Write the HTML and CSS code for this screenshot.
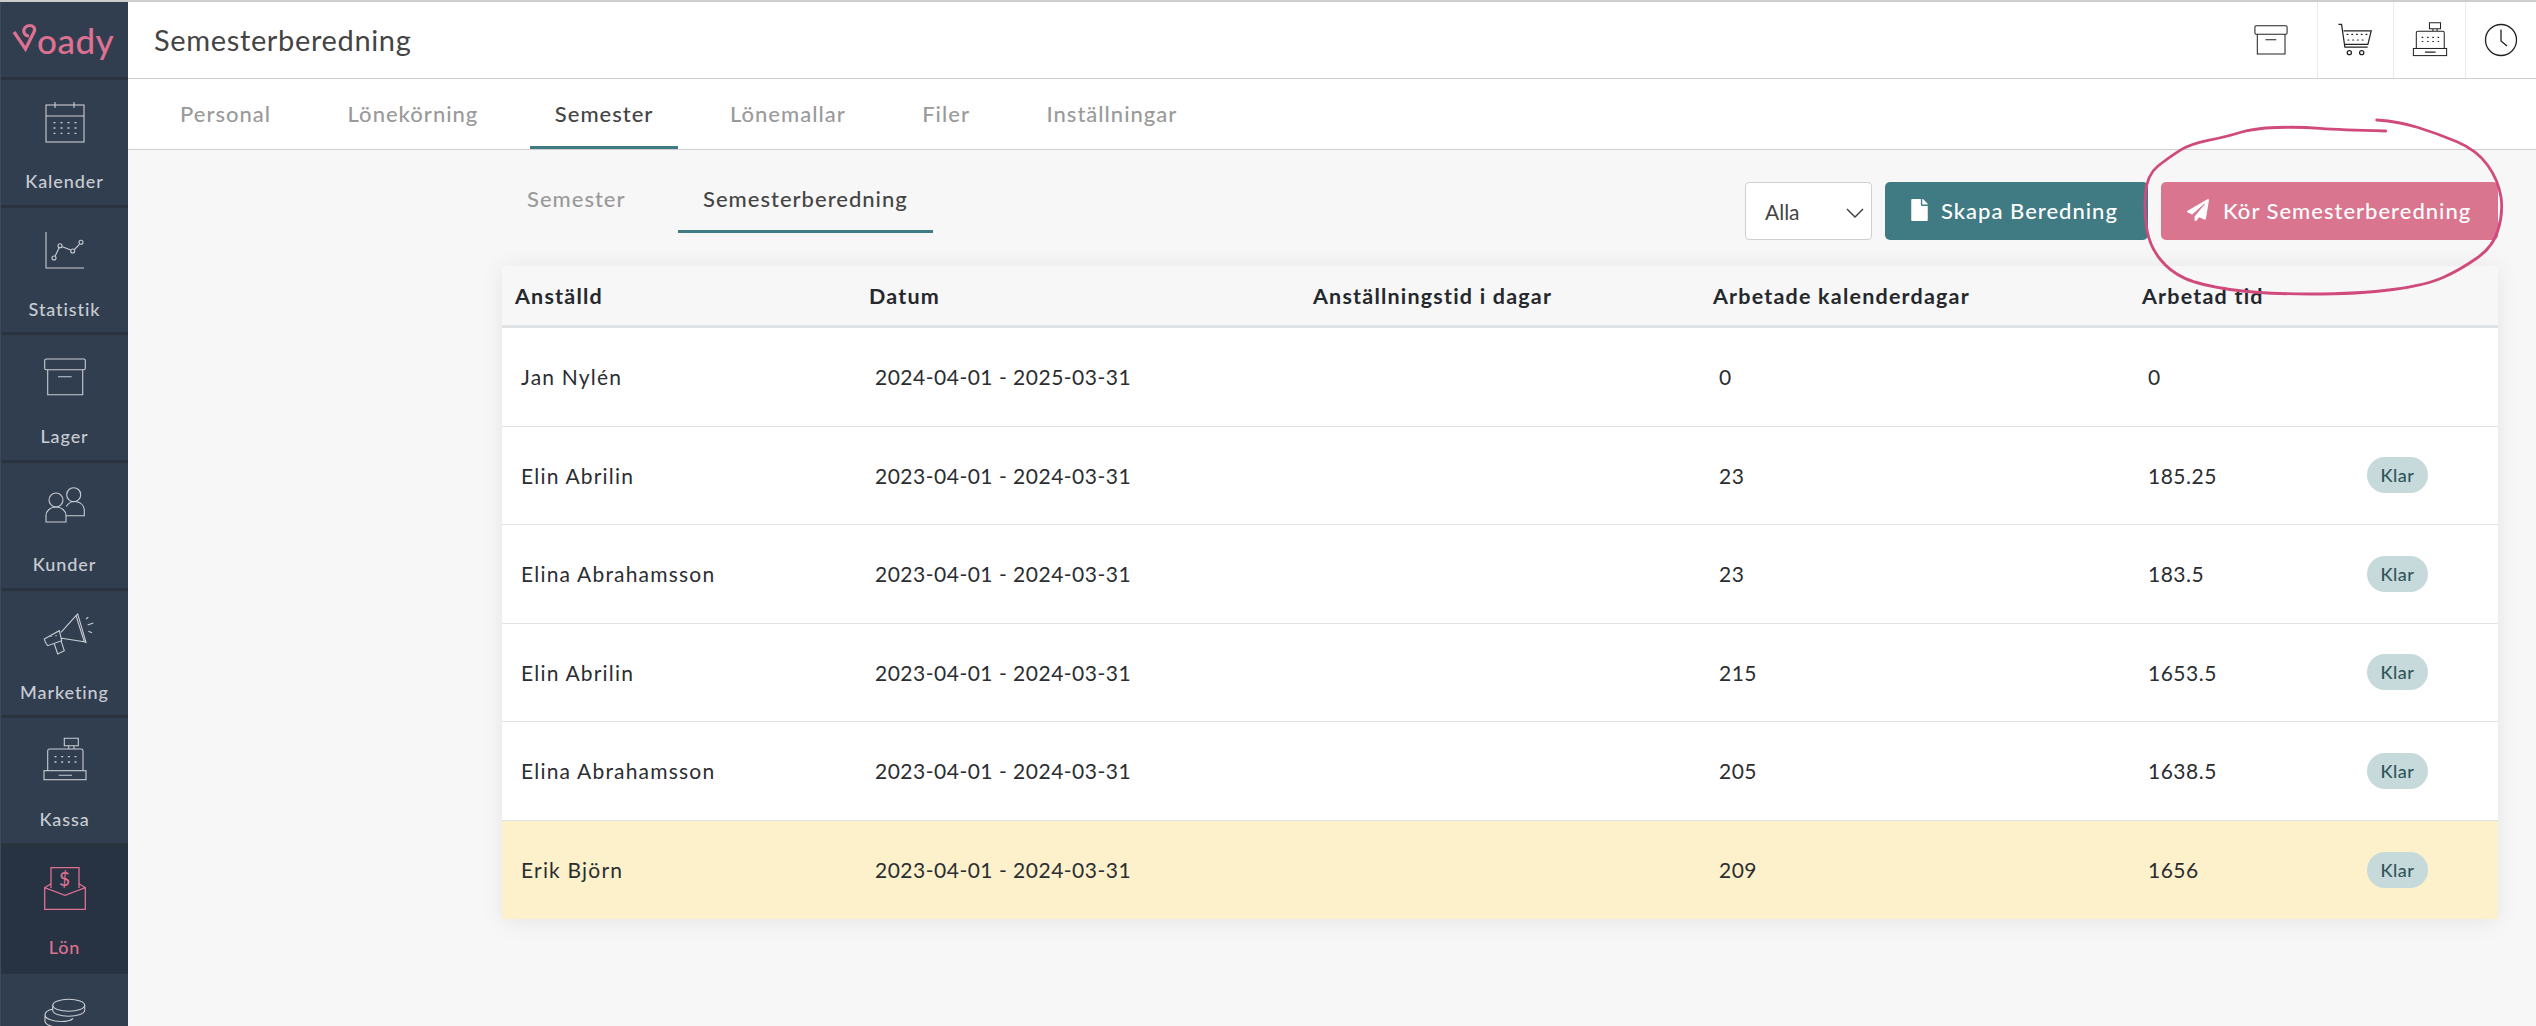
FILE: index.html
```html
<!DOCTYPE html>
<html lang="sv">
  <head>
    <meta charset="UTF-8" />
    <title>Semesterberedning</title>
    <link rel="stylesheet" href="styles.css">
  </head>
  <body>
    <svg class="sprite" width="0" height="0">
      <symbol id="i-archive" viewBox="0 0 48 48">
        <rect x="3.7" y="6" width="40.6" height="10.7" rx="1.5" />
        <path d="M6.7 16.7v25h35v-25M17 23.7h13.7" />
      </symbol>
      <symbol id="i-cash" viewBox="0 0 48 48">
        <rect x="3" y="34.7" width="42" height="9" />
        <path d="M6.7 34.7V15a2 2 0 0 1 2-2h31.3a2 2 0 0 1 2 2v19.7M23.3 2.3h14v7.4h-14zM27.7 9.7V13M33 9.7V13M17.7 39.3H31" />
        <path class="dots" d="M14 20.7h21M14 26h21" stroke-dasharray="1 5.7" />
      </symbol>
    </svg>

    <aside class="sidebar">
      <div class="logo">
        <svg class="logo-v" viewBox="0 0 24 30">
          <path d="M1 7L12.500 24 21 7C23 3 20 .5 16.500 .5 12.500 .5 10 4 11 7.500 12 10 14 11 16 11" />
        </svg>
        <span>oady</span>
      </div>
      <a class="side-item">
        <svg class="side-icon" viewBox="0 0 48 48">
          <rect x="5" y="7" width="38" height="37" />
          <path d="M5 18h38M14 4v6M33 4v6" />
          <path class="dots" d="M13 24.700h22M13 30h22M13 35.300h22" stroke-dasharray="1 6" />
        </svg>
        <span>Kalender</span>
      </a>
      <a class="side-item">
        <svg class="side-icon" viewBox="0 0 48 48">
          <path d="M5 6v36h38M14.200 30l4-8.500M21.300 20.800l8.500 3.300M33.400 23.500l5-5.200" />
          <circle cx="13" cy="32" r="2" />
          <circle cx="19" cy="19.700" r="2" />
          <circle cx="31.700" cy="25" r="2" />
          <circle cx="40" cy="16.300" r="2" />
        </svg>
        <span>Statistik</span>
      </a>
      <a class="side-item">
        <svg class="side-icon"><use href="#i-archive" /></svg>
        <span>Lager</span>
      </a>
      <a class="side-item">
        <svg class="side-icon" viewBox="0 0 48 48">
          <circle cx="15" cy="19" r="7" />
          <circle cx="32.700" cy="13.700" r="7" />
          <path d="M5 41v-6.500a10 8.500 0 0 1 20 0V41zM25 34.700h18.300V29a9.500 9 0 0 0-18-3.500" />
        </svg>
        <span>Kunder</span>
      </a>
      <a class="side-item">
        <svg class="side-icon" viewBox="0 0 48 48">
          <path d="M3.300 30l1 3 2.400 3.700 14-5-2.400-10zM13.300 35l3.400 10 6.600-3.300-3.300-10M20 23.300L35 6.700M20.700 29.300l22.600 3.400M35 6.700l1.700-1.700 8.300 28.300-1.700-.6z" />
          <path d="M45 10l2.300-1.700M46.700 16l5.600-2M47.300 22.300l3.700 1.400" />
          <path class="dots" d="M10 27.300h.1M15 26.700h.1" />
        </svg>
        <span>Marketing</span>
      </a>
      <a class="side-item">
        <svg class="side-icon"><use href="#i-cash" /></svg>
        <span>Kassa</span>
      </a>
      <a class="side-item side-item-active">
        <svg class="side-icon" viewBox="0 0 48 48">
          <path d="M3.700 23.700v21.600h40.600V23.700L24 31.400zM3.700 23.700l6.300-4M44.300 23.700l-6.300-4M10 24V3.700h28V24" />
          <text x="24" y="22" class="side-dollar">$</text>
        </svg>
        <span>Lön</span>
      </a>
      <a class="side-item">
        <svg class="side-icon" viewBox="0 0 48 48">
          <ellipse cx="27.700" cy="13.300" rx="16" ry="6" />
          <path d="M11.700 13.300v5c0 3.300 7.200 6 16 6s16-2.700 16-6v-5M12 17c-5 1-8 3-8 6 0 3.500 7 6.500 16 6.500 6 0 10-1 12-3M4 23v6c0 3.500 7 6.500 16 6.500" />
        </svg>
      </a>
    </aside>

    <div class="main">
      <header class="topbar">
        <h1 class="page-title">Semesterberedning</h1>
        <div class="topbar-actions">
          <div class="topbar-cell topbar-cell-first">
            <svg class="top-icon"><use href="#i-archive" /></svg>
          </div>
          <div class="topbar-cell topbar-cell-cart">
            <svg class="top-icon" viewBox="0 0 40 40">
              <path d="M1.500 3.500h3.300l3.500 24h24M7 10.500h29l-3.500 14H8.500" />
              <path class="dots" d="M10.500 14h24M11.500 20h19" stroke-dasharray="1 4" />
              <circle cx="13" cy="33.300" r="2.200" />
              <circle cx="26" cy="33.300" r="2.200" />
            </svg>
          </div>
          <div class="topbar-cell topbar-cell-cash">
            <svg class="top-icon"><use href="#i-cash" /></svg>
          </div>
          <div class="topbar-cell topbar-cell-clock">
            <svg class="top-icon" viewBox="0 0 36 36">
              <circle cx="18" cy="18" r="15.500" />
              <path d="M18 7.500v11.500l6 5" />
            </svg>
          </div>
        </div>
      </header>

      <nav class="tabs">
        <a class="tab">Personal</a>
        <a class="tab">Lönekörning</a>
        <a class="tab tab-active">Semester</a>
        <a class="tab">Lönemallar</a>
        <a class="tab">Filer</a>
        <a class="tab">Inställningar</a>
      </nav>

      <section class="content">
        <div class="toolbar">
          <div class="tabs-sub">
            <a class="tab">Semester</a>
            <a class="tab tab-active">Semesterberedning</a>
          </div>
          <div class="toolbar-actions">
            <div class="select">
              Alla
              <svg class="select-arrow" viewBox="0 0 18 10"><path d="M1 1l8 8 8-8" /></svg>
            </div>
            <button class="btn btn-teal">
              <svg class="btn-icon btn-icon-file" viewBox="0 0 384 512">
                <path d="M224 136V0H24C10.700 0 0 10.700 0 24v464c0 13.300 10.700 24 24 24h336c13.300 0 24-10.700 24-24V160H248c-13.200 0-24-10.800-24-24zm160-14.100v6.100H256V0h6.100c6.400 0 12.500 2.500 17 7l97.900 98c4.500 4.500 7 10.600 7 16.900z" />
              </svg>
              Skapa Beredning
            </button>
            <button class="btn btn-pink">
              <svg class="btn-icon" viewBox="0 0 512 512">
                <path d="M476 3.200L12.500 270.600c-18.100 10.400-15.800 35.600 2.200 43.200L121 358.400l287.300-253.200c5.500-4.900 13.300 2.600 8.600 8.300L176 407v80.500c0 23.600 28.500 32.900 42.500 15.800L282 426l124.600 52.200c14.200 6 30.400-2.900 33-18.200l72-432C515 7.800 493.300-6.800 476 3.200z" />
              </svg>
              Kör Semesterberedning
            </button>
          </div>
        </div>

        <table class="report">
          <colgroup>
            <col class="col-name" />
            <col class="col-date" />
            <col class="col-days" />
            <col class="col-worked" />
            <col class="col-time" />
            <col class="col-status" />
          </colgroup>
          <thead>
            <tr>
              <th>Anställd</th>
              <th>Datum</th>
              <th>Anställningstid i dagar</th>
              <th>Arbetade kalenderdagar</th>
              <th>Arbetad tid</th>
              <th></th>
            </tr>
          </thead>
          <tbody>
            <tr>
              <td>Jan Nylén</td>
              <td>2024-04-01 - 2025-03-31</td>
              <td></td>
              <td>0</td>
              <td>0</td>
              <td></td>
            </tr>
            <tr>
              <td>Elin Abrilin</td>
              <td>2023-04-01 - 2024-03-31</td>
              <td></td>
              <td>23</td>
              <td>185.25</td>
              <td><span class="badge">Klar</span></td>
            </tr>
            <tr>
              <td>Elina Abrahamsson</td>
              <td>2023-04-01 - 2024-03-31</td>
              <td></td>
              <td>23</td>
              <td>183.5</td>
              <td><span class="badge">Klar</span></td>
            </tr>
            <tr>
              <td>Elin Abrilin</td>
              <td>2023-04-01 - 2024-03-31</td>
              <td></td>
              <td>215</td>
              <td>1653.5</td>
              <td><span class="badge">Klar</span></td>
            </tr>
            <tr>
              <td>Elina Abrahamsson</td>
              <td>2023-04-01 - 2024-03-31</td>
              <td></td>
              <td>205</td>
              <td>1638.5</td>
              <td><span class="badge">Klar</span></td>
            </tr>
            <tr class="row-highlight">
              <td>Erik Björn</td>
              <td>2023-04-01 - 2024-03-31</td>
              <td></td>
              <td>209</td>
              <td>1656</td>
              <td><span class="badge">Klar</span></td>
            </tr>
          </tbody>
        </table>
      </section>
    </div>

    <!-- handritad markering ovanpå knappen -->
    <svg class="scribble" viewBox="0 0 2536 1026">
      <path d="M2385.700 131Q2340 130 2320 128.400Q2300 126.700 2276.700 127.500Q2253.300 128.300 2240 132.500Q2226.700 136.700 2208 140.400Q2190 144 2180 150.400Q2170 156.700 2158 166Q2146.700 175 2145.400 194Q2144 213.300 2147 230Q2150 246.700 2160 259Q2170 271.700 2185 278.400Q2200 285 2230 289.500Q2260 294 2310 294Q2360 294 2393 289.500Q2426.700 285 2443 277.500Q2460 270 2477 258Q2493.300 246.700 2498 230Q2503.300 213.300 2501 197Q2498.300 180 2487.500 165Q2476.700 150 2457 141.700Q2436.700 133.300 2418 127.500Q2400 121.700 2376.700 120" />
    </svg>
  </body>
</html>
```

FILE: styles.css
```css
* {
  margin: 0;
  padding: 0;
  box-sizing: border-box;
  font-family: "Lato", "Liberation Sans", sans-serif;
}

html,
body {
  height: 1026px;
  overflow: hidden;
}

body {
  display: flex;
  position: relative;
  border-top: 2px solid #cdcdcd;
  background: #f7f7f7;
  color: #2a2d31;
}

.sprite {
  position: absolute;
}

symbol {
  overflow: visible;
}

/* Sidomeny */
.sidebar {
  width: 128px;
  flex: none;
  height: 1024px;
  overflow: hidden;
  background: #313e50;
  border-left: 1px solid #3d4a5c;
}

.logo {
  height: 78px;
  display: flex;
  align-items: center;
  padding-left: 12px;
  border-bottom: 3px solid #29343f;
  color: #de7090;
  font-size: 35px;
  font-weight: 500;
  letter-spacing: 0.5px;
}

.logo-v {
  width: 24px;
  height: 30px;
  overflow: visible;
  flex: none;
  fill: none;
  stroke: #de7090;
  stroke-width: 3.2;
}

.side-item {
  height: 127.7px;
  display: flex;
  flex-direction: column;
  align-items: center;
  padding-top: 18px;
  border-bottom: 3px solid #29343f;
  color: #c9cdd3;
  font-size: 18px;
  font-weight: 500;
  letter-spacing: 0.9px;
  line-height: 22px;
}

.side-item span {
  margin-top: 24px;
}

.side-icon {
  width: 48px;
  height: 48px;
  flex: none;
  overflow: visible;
  fill: none;
  stroke: #c9cdd3;
  stroke-width: 1.1;
}

.dots {
  stroke-width: 1.3;
  stroke-linecap: round;
}

.side-item-active {
  background: #273342;
  border-bottom: 0;
  color: #de7090;
}

.side-item-active .side-icon {
  stroke: #de7090;
  stroke-width: 1.3;
}

.side-dollar {
  fill: #de7090;
  stroke: none;
  font-size: 19px;
  text-anchor: middle;
}

/* Innehåll */
.main {
  flex: 1;
  min-width: 0;
}

.topbar {
  height: 77px;
  display: flex;
  align-items: stretch;
  justify-content: space-between;
  background: #fff;
  border-bottom: 1px solid #cfcfcf;
}

.page-title {
  align-self: center;
  margin-top: -1px;
  padding-left: 26px;
  color: #444;
  font-size: 29px;
  font-weight: 400;
  letter-spacing: 0.65px;
}

.topbar-actions {
  display: flex;
}

.topbar-cell {
  display: flex;
  align-items: center;
  justify-content: center;
  border-left: 1px solid #ebebeb;
}

.topbar-cell-first {
  width: 92px;
  border-left: 0;
}

.topbar-cell-cart {
  width: 76px;
}

.topbar-cell-cash {
  width: 72px;
}

.topbar-cell-clock {
  width: 71px;
}

.top-icon {
  width: 38px;
  height: 38px;
  overflow: visible;
  fill: none;
  stroke: #222;
  stroke-width: 1.3;
}

.topbar-cell-clock .top-icon {
  width: 36px;
  height: 36px;
}

.tabs,
.tabs-sub {
  display: flex;
  gap: 26.5px;
}

.tabs {
  height: 71px;
  padding-left: 27px;
  background: #fff;
  border-bottom: 1px solid #cfcfcf;
}

.tabs-sub {
  height: 63px;
  gap: 27.5px;
}

.tab {
  display: flex;
  align-items: center;
  padding: 2px 25px 0;
  border-bottom: 3px solid transparent;
  color: #9a9a9a;
  font-size: 22px;
  font-weight: 500;
  letter-spacing: 1px;
}

.tabs-sub .tab {
  padding: 0 25px 3px;
}

.tab-active {
  border-bottom-color: #407a82;
  color: #444;
}

.content {
  padding: 20px 38px 0 374px;
}

.toolbar {
  height: 96px;
  display: flex;
  justify-content: space-between;
  align-items: flex-start;
}

.toolbar-actions {
  display: flex;
  gap: 13px;
  margin-top: 12px;
}

.select {
  width: 127px;
  height: 58px;
  display: flex;
  align-items: center;
  padding-left: 19px;
  position: relative;
  background: #fff;
  border: 1px solid #cfcfcf;
  border-radius: 4px;
  color: #444;
  font-size: 21px;
}

.select-arrow {
  position: absolute;
  right: 7px;
  top: 25px;
  width: 18px;
  height: 10px;
  fill: none;
  stroke: #444;
  stroke-width: 1.5;
}

.btn {
  height: 58px;
  display: flex;
  align-items: center;
  padding: 0 26px 2px;
  border: 0;
  border-radius: 5px;
  color: #fff;
  font-size: 22px;
  font-weight: 500;
  letter-spacing: 1px;
}

.btn-teal {
  width: 263px;
  background: #407a82;
}

.btn-pink {
  width: 337px;
  background: #da7590;
}

.btn-icon {
  width: 22px;
  height: 22px;
  margin-right: 14px;
  fill: #fff;
}

.btn-icon-file {
  width: 17px;
  margin-right: 13px;
}

/* Tabell */
.report {
  width: 1996px;
  border-collapse: separate;
  border-spacing: 0;
  table-layout: fixed;
  border-radius: 6px 6px 0 0;
  box-shadow: 0 2px 24px rgba(0, 0, 0, 0.08);
}

.col-name {
  width: 354px;
}

.col-date {
  width: 444px;
}

.col-days {
  width: 400px;
}

.col-worked {
  width: 429px;
}

.col-time {
  width: 221px;
}

.col-status {
  width: 148px;
}

.report th {
  height: 62px;
  padding: 0 13px;
  text-align: left;
  background: #f7f7f7;
  border-bottom: 3px solid #dfe3e6;
  color: #25282c;
  font-size: 21.5px;
  font-weight: 700;
  letter-spacing: 1.2px;
}

.report td {
  height: 98.5px;
  padding: 0 19px;
  background: #fff;
  border-bottom: 1px solid #dfe3e6;
  font-size: 21px;
  letter-spacing: 0.5px;
}

.report td:first-child {
  letter-spacing: 1.2px;
}

.report .row-highlight td {
  background: #fcf1cb;
  border-bottom: 0;
}

.report td .badge {
  display: inline-block;
  width: 61px;
  height: 36px;
  margin-left: -2px;
  line-height: 36px;
  text-align: center;
  background: #c6d9db;
  border-radius: 18px;
  color: #2f5559;
  font-size: 18px;
  font-weight: 500;
}

.scribble {
  position: absolute;
  left: 0;
  top: -2px;
  width: 2536px;
  height: 1026px;
  pointer-events: none;
  fill: none;
  stroke: #d14a7c;
  stroke-width: 2.8;
  stroke-linecap: round;
}
```
